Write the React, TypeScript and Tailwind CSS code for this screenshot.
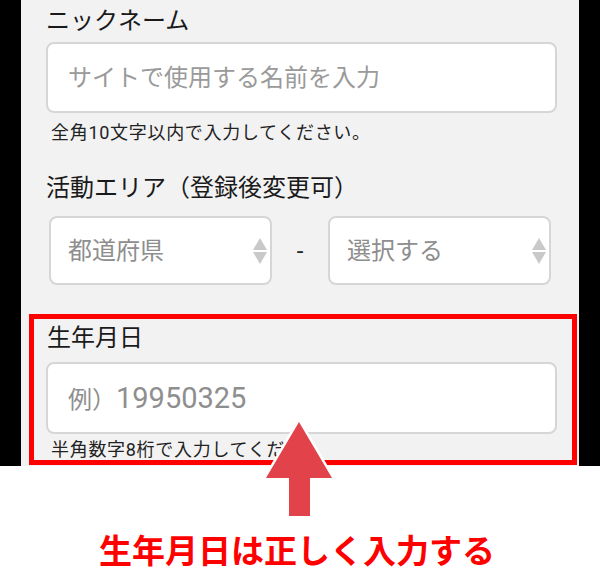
import React from "react";

const jp = { fontFamily: 'Roboto, "Noto Sans CJK JP", sans-serif' };

function Arrows() {
  return (
    <svg width="14" height="26" viewBox="0 0 14 26" className="shrink-0">
      <polygon points="7,0 14,12 0,12" fill="#c9c9c9" />
      <polygon points="0,14 14,14 7,26" fill="#c9c9c9" />
    </svg>
  );
}

function Select({ label }: { label: string }) {
  return (
    <div className="w-[223px] h-[69px] bg-white border-2 border-[#d6d6d6] rounded-[8px] flex items-center justify-between pl-[17px] pr-[3px]">
      <span className="text-[24px] text-[#8e8e8e] leading-none">{label}</span>
      <Arrows />
    </div>
  );
}

export default function App() {
  return (
    <div className="relative w-[600px] h-[575px] bg-white overflow-hidden" style={jp}>
      <div className="flex h-[466px]">
        <div className="w-[21px] bg-black" />
        <div className="flex-1 bg-[#f2f2f2] pl-[25px] pr-[22px] overflow-hidden">
          <div className="h-[42px] leading-[42px] text-[24px] text-[#1a1a1a]">ニックネーム</div>
          <div className="h-[71px] bg-white border-2 border-[#d6d6d6] rounded-[8px] flex items-center pl-[20px]">
            <span className="text-[24px] text-[#9a9a9a] leading-none">サイトで使用する名前を入力</span>
          </div>
          <div className="h-[40px] leading-[40px] text-[18px] tracking-[0.7px] text-[#222] pl-[5px]">全角10文字以内で入力してください。</div>
          <div className="mt-[20px] h-[30px] leading-[30px] text-[24px] text-[#1a1a1a]">活動エリア（登録後変更可）</div>
          <div className="mt-[13px] flex items-center pl-[3px] w-[505px]">
            <Select label="都道府県" />
            <div className="flex-1 flex justify-center">
              <span className="text-[24px] text-[#222] leading-none">-</span>
            </div>
            <Select label="選択する" />
          </div>
          <div className="mt-[38px] h-[30px] leading-[30px] text-[24px] text-[#1a1a1a] pl-[1px]">生年月日</div>
          <div className="mt-[9px] h-[72px] bg-white border-2 border-[#d6d6d6] rounded-[8px] flex items-center pl-[20px]">
            <span className="text-[24px] text-[#8e8e8e] leading-none">
              例）<span className="text-[29px]">19950325</span>
            </span>
          </div>
          <div className="mt-[6px] h-[20px] w-[262px] overflow-hidden leading-[20px] text-[18px] tracking-[0.7px] text-[#222] pl-[5px] whitespace-nowrap">
            半角数字8桁で入力してください。
          </div>
        </div>
        <div className="w-[21px] bg-black" />
      </div>

      <div className="absolute left-[29px] top-[314px] w-[548px] h-[151px] border-[5px] border-[#ff0000]" />

      <svg className="absolute left-0 top-0" width="600" height="575" viewBox="0 0 600 575">
        <polygon
          points="299,422 332,478 310,478 310,516 289,516 289,478 266,478"
          fill="#e2424a"
          stroke="#ffffff"
          strokeWidth="5"
          strokeLinejoin="miter"
          paintOrder="stroke"
        />
      </svg>

      <div className="absolute left-0 right-0 top-[528px] flex justify-center pr-[6px]">
        <span className="text-[33px] font-bold text-[#ff0000] leading-[42px]" style={{ fontFamily: '"Noto Sans CJK JP", sans-serif' }}>
          生年月日は正しく入力する
        </span>
      </div>
    </div>
  );
}
